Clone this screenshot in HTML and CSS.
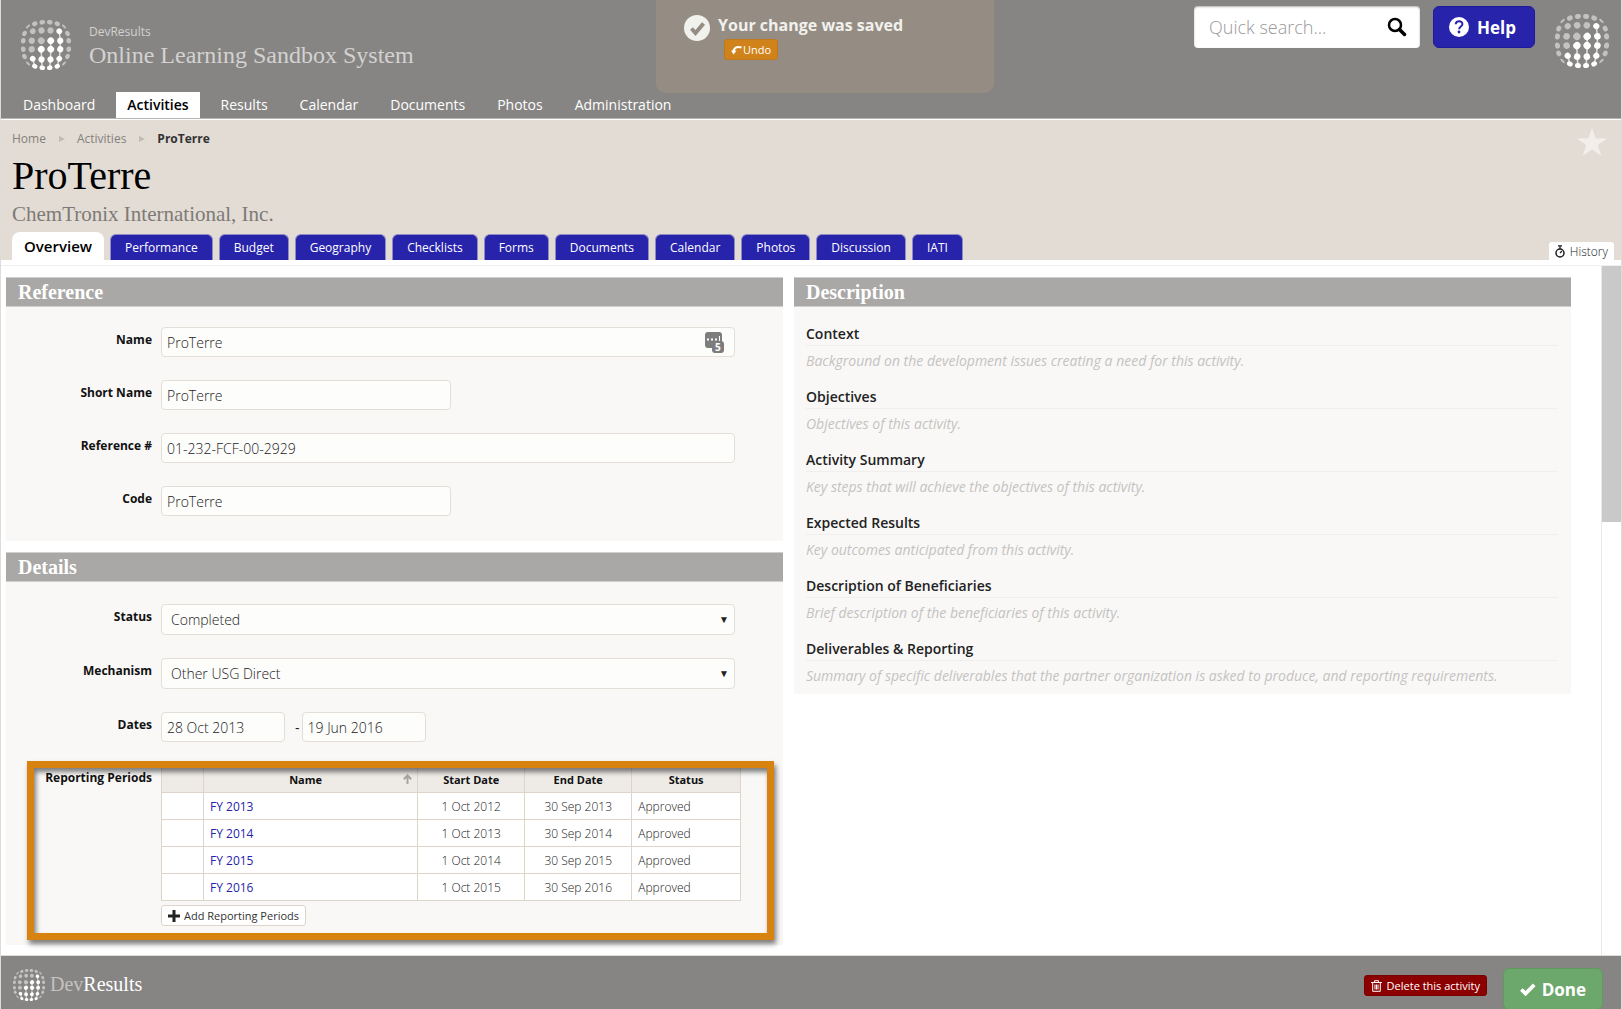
FILE: index.html
```html
<!DOCTYPE html>
<html lang="en">
<head>
  <meta charset="UTF-8">
  <meta name="viewport" content="width=device-width, initial-scale=1.0">
  <title>ProTerre - DevResults</title>
  <link rel="stylesheet" href="styles.css">
</head>
<body>

<header class="site-header">
  <div class="header-top">
    <a href="#" class="brand">
      <svg class="globe globe-brand" viewBox="-50 -50 100 100"></svg>
      <span class="brand-text">
        <span class="brand-name">DevResults</span>
        <span class="brand-title">Online Learning Sandbox System</span>
      </span>
    </a>
    <div class="header-actions">
      <form class="search">
        <input type="text" placeholder="Quick search..." aria-label="Quick search">
        <button type="button" aria-label="Search">
          <svg width="20" height="20" viewBox="0 0 20 20" fill="none" stroke="#000" stroke-linecap="round"><circle cx="8" cy="8" r="6" stroke-width="2.500"/><path d="M12.500 12.500L17.500 17.500" stroke-width="3.500"/></svg>
        </button>
      </form>
      <button type="button" class="help">
        <svg width="20" height="20" viewBox="0 0 20 20"><circle cx="10" cy="10" r="10" fill="#fff"/><path d="M6.7 7.2c.3-4 6.8-3.8 6.7 0 0 2.300-3.300 2.400-3.300 5" fill="none" stroke="#2723ab" stroke-width="2"/><circle cx="10" cy="15" r="1.400" fill="#2723ab"/></svg>
        Help
      </button>
      <svg class="globe globe-user" viewBox="-50 -50 100 100"></svg>
    </div>
  </div>
  <nav class="main-nav">
    <a href="#">Dashboard</a>
    <a href="#" class="active">Activities</a>
    <a href="#">Results</a>
    <a href="#">Calendar</a>
    <a href="#">Documents</a>
    <a href="#">Photos</a>
    <a href="#">Administration</a>
  </nav>
</header>

<!-- Saved message -->
<div class="toast">
  <svg width="26" height="26" viewBox="0 0 26 26"><circle cx="13" cy="13" r="13" fill="#f1f1ee"/><path d="M7.500 13.500l4 4.500 8-9.500" fill="none" stroke="#958d83" stroke-width="4"/></svg>
  <div>
    <strong>Your change was saved</strong>
    <button type="button" class="undo">
      <svg width="11" height="10" viewBox="0 0 11 10"><path d="M2.500 7C2.500 3 6 .8 10.500 2.500" fill="none" stroke="#fff" stroke-width="2"/><path d="M0 5.500h5.500L2.600 9.500z" fill="#fff"/></svg>Undo
    </button>
  </div>
</div>

<section class="page-head">
  <div class="breadcrumb">
    <a href="#">Home</a><i></i><a href="#">Activities</a><i></i><b>ProTerre</b>
  </div>
  <h1>ProTerre</h1>
  <h2>ChemTronix International, Inc.</h2>
  <div class="tab-row">
    <nav class="tabs">
      <a href="#" class="active">Overview</a>
      <a href="#">Performance</a>
      <a href="#">Budget</a>
      <a href="#">Geography</a>
      <a href="#">Checklists</a>
      <a href="#">Forms</a>
      <a href="#">Documents</a>
      <a href="#">Calendar</a>
      <a href="#">Photos</a>
      <a href="#">Discussion</a>
      <a href="#">IATI</a>
    </nav>
    <button type="button" class="history">
      <svg width="10" height="13" viewBox="0 0 10 13" fill="none" stroke="#222"><circle cx="5" cy="8" r="4" stroke-width="1.500"/><path d="M3 .8h4M5 1v3M5 8l2-2" stroke-width="1.300"/></svg>
      History
    </button>
  </div>
  <svg class="star" width="30" height="28" viewBox="0 0 30 28"><path d="M15 0l3.600 10.500H30l-9.200 6.600L24.300 28 15 21.400 5.700 28l3.500-10.900L0 10.500h11.400z" fill="#f2efea"/></svg>
</section>

<main class="content">
  <div class="columns">
    <div class="column">
      <section class="panel">
        <h3>Reference</h3>
        <div class="form">
          <div class="row">
            <label for="name">Name</label>
            <div class="field">
              <input type="text" id="name" value="ProTerre">
              <svg class="pass-icon" width="19" height="21" viewBox="0 0 19 21"><rect width="17" height="16" rx="3" fill="#7d7d7d"/><rect x="7" y="9" width="12" height="12" rx="3" fill="#7d7d7d"/><path d="M2 7.500h2M6 7.500h2M10 7.500h2" stroke="#fff" stroke-width="2"/><path d="M14.500 4v5" stroke="#fff"/><text x="10" y="19" fill="#fff" font-size="10" font-weight="700">5</text></svg>
            </div>
          </div>
          <div class="row">
            <label for="short">Short Name</label>
            <div class="field"><input type="text" id="short" class="short" value="ProTerre"></div>
          </div>
          <div class="row">
            <label for="ref">Reference #</label>
            <div class="field"><input type="text" id="ref" value="01-232-FCF-00-2929"></div>
          </div>
          <div class="row">
            <label for="code">Code</label>
            <div class="field"><input type="text" id="code" class="short" value="ProTerre"></div>
          </div>
        </div>
      </section>

      <section class="panel">
        <h3>Details</h3>
        <div class="form details">
          <div class="row">
            <label for="status">Status</label>
            <div class="field select">
              <select id="status"><option>Completed</option></select>
            </div>
          </div>
          <div class="row">
            <label for="mechanism">Mechanism</label>
            <div class="field select">
              <select id="mechanism"><option>Other USG Direct</option></select>
            </div>
          </div>
          <div class="row">
            <label for="start">Dates</label>
            <div class="field dates">
              <input type="text" id="start" value="28 Oct 2013">
              <span>-</span>
              <input type="text" value="19 Jun 2016" aria-label="End date">
            </div>
          </div>
          <div class="row periods">
            <span class="label">Reporting Periods</span>
            <div class="field">
              <table>
                <thead>
                  <tr>
                    <th class="col-check"></th>
                    <th class="col-name">Name<svg class="sort" width="9" height="10" viewBox="0 0 9 10" fill="none" stroke="#a8a49f" stroke-width="2"><path d="M4.500 10V1.500M.8 5.200l3.700-3.700 3.700 3.700"/></svg></th>
                    <th class="col-date">Start Date</th>
                    <th class="col-date">End Date</th>
                    <th>Status</th>
                  </tr>
                </thead>
                <tbody>
                  <tr><td></td><td><a href="#">FY 2013</a></td><td class="date">1 Oct 2012</td><td class="date">30 Sep 2013</td><td>Approved</td></tr>
                  <tr><td></td><td><a href="#">FY 2014</a></td><td class="date">1 Oct 2013</td><td class="date">30 Sep 2014</td><td>Approved</td></tr>
                  <tr><td></td><td><a href="#">FY 2015</a></td><td class="date">1 Oct 2014</td><td class="date">30 Sep 2015</td><td>Approved</td></tr>
                  <tr><td></td><td><a href="#">FY 2016</a></td><td class="date">1 Oct 2015</td><td class="date">30 Sep 2016</td><td>Approved</td></tr>
                </tbody>
              </table>
              <button type="button" class="add">
                <svg width="12" height="12" viewBox="0 0 12 12"><path d="M6 0v12M0 6h12" stroke="#222" stroke-width="3"/></svg>
                Add Reporting Periods
              </button>
            </div>
            <div class="highlight"></div>
          </div>
        </div>
      </section>
    </div>

    <div class="column">
      <section class="panel">
        <h3>Description</h3>
        <dl class="description">
          <dt>Context</dt>
          <dd>Background on the development issues creating a need for this activity.</dd>
          <dt>Objectives</dt>
          <dd>Objectives of this activity.</dd>
          <dt>Activity Summary</dt>
          <dd>Key steps that will achieve the objectives of this activity.</dd>
          <dt>Expected Results</dt>
          <dd>Key outcomes anticipated from this activity.</dd>
          <dt>Description of Beneficiaries</dt>
          <dd>Brief description of the beneficiaries of this activity.</dd>
          <dt>Deliverables &amp; Reporting</dt>
          <dd>Summary of specific deliverables that the partner organization is asked to produce, and reporting requirements.</dd>
        </dl>
      </section>
    </div>
  </div>
  <div class="scrollbar"><div class="thumb"></div></div>
</main>

<footer class="site-footer">
  <a href="#" class="footer-brand">
    <svg class="globe globe-footer" viewBox="-50 -50 100 100"></svg>
    <span><span class="dim">Dev</span>Results</span>
  </a>
  <div class="footer-actions">
    <button type="button" class="delete">
      <svg width="11" height="12" viewBox="0 0 11 12" fill="none" stroke="#fff"><path d="M0 2.500h11M3.500 2V.7h4V2M1.700 3v8.300h7.600V3M4 4.500v5M5.500 4.500v5M7 4.500v5"/></svg>
      Delete this activity
    </button>
    <button type="button" class="done">
      <svg width="17" height="13" viewBox="0 0 17 13"><path d="M1.500 6.500l4.500 4.500L15.500 1.500" fill="none" stroke="#fff" stroke-width="4"/></svg>
      Done
    </button>
  </div>
</footer>

<script>
  // One quadrant of the globe's dots, mirrored into the other three
  const quadrant = [
    [[19, 17], [57, 17], [91, 17]],
    [[18, 58], [53, 55], [86, 46]],
    [[15, 91], [45, 85], [72, 74]]
  ];
  // Dots that are lit, by row, top to bottom
  const lit = ['......', '....x.', '...xx.', '..xxx.', '.xxxx.', '.xxxx.'];

  function getPoint(row, col) {
    const point = quadrant[row < 3 ? 2 - row : row - 3][col < 3 ? 2 - col : col - 3];
    return [point[0] * (col < 3 ? -1 : 1) / 2, point[1] * (row < 3 ? -1 : 1) / 2];
  }

  function drawGlobe(svg) {
    let dots = '';
    for (let row = 0; row < 6; row++) {
      for (let col = 0; col < 6; col++) {
        const [x, y] = getPoint(row, col);
        const distance = Math.hypot(x, y) / 50;
        const squash = distance > 1 ? 0.3 : Math.sqrt(1 - 0.64 * distance * distance);
        const angle = Math.atan2(y, x) * 180 / Math.PI;
        const isLit = lit[row][col] === 'x';
        dots += `<ellipse rx="${7 * squash}" ry="${7 - 1.5 * distance}" fill="${isLit ? '#ffffff' : '#c3c2c0'}" transform="translate(${x} ${y}) rotate(${angle})"/>`;

        // Lit dots are joined down each column
        if (isLit && row < 5) {
          const [x2, y2] = getPoint(row + 1, col);
          dots += `<line x1="${x}" y1="${y}" x2="${x2}" y2="${y2}" stroke="#ffffff" stroke-opacity="0.7" stroke-width="3"/>`;
        }
      }
    }
    svg.innerHTML = dots;
  }

  document.querySelectorAll('.globe').forEach(drawGlobe);
</script>

</body>
</html>
```
FILE: styles.css
```css
* {
  box-sizing: border-box;
}

body {
  margin: 0;
  min-height: 100vh;
  display: flex;
  flex-direction: column;
  position: relative;
  border-left: 1px solid #dcdcdc;
  border-right: 1px solid #dcdcdc;
  background-color: #fff;
  color: #222;
  font-family: 'Open Sans', sans-serif;
  font-size: 14px;
}

a {
  text-decoration: none;
}

button,
input,
select {
  font-family: inherit;
}

button {
  display: flex;
  align-items: center;
  cursor: pointer;
}

/* Header */
.site-header {
  background-color: #868583;
  border-bottom: 1px solid #b5b4b1;
}

.header-top {
  display: flex;
  justify-content: space-between;
  height: 92px;
}

.brand {
  display: flex;
  gap: 18px;
  padding: 20px 0 0 20px;
}

.globe-brand {
  width: 50px;
  height: 50px;
}

.brand-text {
  display: flex;
  flex-direction: column;
  padding-top: 3px;
  color: #d3d2d0;
}

.brand-name {
  font-size: 12px;
  line-height: 18px;
}

.brand-title {
  font-family: 'Roboto Slab', 'Liberation Serif', serif;
  font-size: 24px;
  line-height: 28px;
}

.header-actions {
  display: flex;
  align-items: flex-start;
  padding: 6px 12px 0 0;
}

.search {
  display: flex;
  width: 226px;
  height: 42px;
  border-radius: 4px;
  background-color: #fff;
  box-shadow: inset 0 1px 2px rgba(0, 0, 0, 0.3);
}

.search input {
  flex: 1;
  min-width: 0;
  padding: 0 0 0 15px;
  border: none;
  background: transparent;
  font-size: 18px;
  font-weight: 300;
}

.search input::placeholder {
  color: #999;
}

.search button {
  padding: 0 13px;
  border: none;
  background: transparent;
}

.help {
  gap: 8px;
  width: 102px;
  height: 42px;
  margin: 0 20px 0 13px;
  padding: 0 15px;
  border: 1px solid #1f1b9a;
  border-radius: 6px;
  background-color: #2723ab;
  color: #fff;
  font-size: 17px;
  font-weight: 700;
}

.globe-user {
  width: 54px;
  height: 54px;
  margin-top: 8px;
}

.main-nav {
  display: flex;
  gap: 10px;
  padding-left: 11px;
}

.main-nav a {
  padding: 0 11px;
  color: #fff;
  line-height: 26px;
}

.main-nav .active {
  background-color: #fff;
  color: #000;
  font-weight: 600;
}

/* Saved message */
.toast {
  position: absolute;
  top: 0;
  left: 50%;
  display: flex;
  gap: 8px;
  width: 338px;
  height: 93px;
  margin-left: -155px;
  padding: 15px 28px;
  border-radius: 0 0 10px 10px;
  background-color: #958d83;
}

.toast strong {
  display: block;
  color: #f1f1ee;
  font-size: 16px;
  line-height: 20px;
}

.undo {
  gap: 1px;
  height: 21px;
  margin: 4px 0 0 6px;
  padding: 0 6px;
  border: 1px solid #c07818;
  border-radius: 3px;
  background-color: #d0831b;
  color: #fff;
  font-size: 11px;
}

/* Page title */
.page-head {
  position: relative;
  padding: 10px 7px 0 11px;
  border-top: 1px solid #fff;
  background-color: #e2dcd5;
}

.breadcrumb {
  display: flex;
  align-items: center;
  color: #333;
  font-size: 12px;
  line-height: 18px;
}

.breadcrumb a {
  color: #85817c;
}

.breadcrumb i {
  margin: 0 12px 0 13px;
  border-left: 6px solid #c4bab0;
  border-top: 3px solid transparent;
  border-bottom: 3px solid transparent;
}

h1,
h2 {
  margin: 0;
  font-family: 'Roboto Slab', 'Liberation Serif', serif;
  font-weight: 400;
}

h1 {
  color: #000;
  font-size: 40px;
  line-height: 56px;
}

h2 {
  color: #7d7a76;
  font-size: 21px;
  line-height: 20px;
}

.tab-row {
  display: flex;
  justify-content: space-between;
  align-items: flex-end;
  margin-top: 8px;
}

.tabs {
  display: flex;
  align-items: flex-end;
  gap: 6px;
}

.tabs a {
  padding: 0 14px;
  border: 1px solid #8f8bc4;
  border-bottom: none;
  border-radius: 6px 6px 0 0;
  background-color: #2723ab;
  color: #fff;
  font-size: 12px;
  font-weight: 500;
  line-height: 25px;
}

.tabs .active {
  padding: 0 12px;
  border: none;
  border-radius: 8px 8px 0 0;
  background-color: #fff;
  color: #000;
  font-size: 15px;
  font-weight: 600;
  line-height: 28px;
}

.history {
  gap: 5px;
  height: 18px;
  padding: 0 6px;
  border: none;
  border-radius: 3px 3px 0 0;
  background-color: #fff;
  color: #222;
  font-size: 12px;
  font-weight: 300;
}

.star {
  position: absolute;
  top: 8px;
  right: 14px;
}

/* Content */
.content {
  flex: 1;
  display: flex;
  margin-top: 5px;
  border-top: 1px solid #f0f0f0;
}

.columns {
  flex: 1;
  display: grid;
  grid-template-columns: 1fr 1fr;
  gap: 11px;
  padding: 11px 30px 10px 5px;
}

.column {
  display: flex;
  flex-direction: column;
  gap: 11px;
}

.scrollbar {
  width: 20px;
  border-left: 1px solid #e8e8e8;
}

.thumb {
  height: 256px;
  background-color: #c9c9c9;
}

.panel {
  background-color: #f9f8f7;
}

.panel h3 {
  margin: 0;
  padding: 0 12px;
  border-top: 1px solid #d0cfcd;
  border-bottom: 1px solid #d0cfcd;
  background-color: #a9a8a6;
  color: #fff;
  font-family: 'Roboto Slab', 'Liberation Serif', serif;
  font-size: 20px;
  line-height: 28px;
}

.form {
  display: flex;
  flex-direction: column;
  gap: 23px;
  padding: 20px 48px 25px 0;
}

.details {
  padding-top: 22px;
  padding-bottom: 19px;
}

.row {
  display: grid;
  grid-template-columns: 146px 1fr;
  column-gap: 9px;
}

.row label,
.label {
  color: #111;
  font-size: 12px;
  font-weight: 700;
  line-height: 26px;
  text-align: right;
}

.field {
  position: relative;
}

.field input,
.field select {
  display: block;
  width: 100%;
  height: 30px;
  padding: 0 5px;
  border: 1px solid #e3ded8;
  border-radius: 4px;
  background-color: #fdfdfc;
  color: #222;
  font-size: 14px;
  font-weight: 300;
}

.field .short {
  width: 290px;
}

.pass-icon {
  position: absolute;
  top: 5px;
  right: 11px;
}

.details .field select {
  height: 31px;
  padding: 0 9px;
  appearance: none;
}

.select::after {
  content: '▼';
  position: absolute;
  top: 8px;
  right: 6px;
  font-size: 10px;
  line-height: 14px;
  pointer-events: none;
}

.dates {
  display: flex;
  align-items: center;
}

.dates input {
  width: 124px;
}

.dates span {
  padding: 0 2px 0 10px;
}

/* Reporting periods */
.periods {
  position: relative;
}

table {
  width: calc(100% + 6px);
  border-collapse: collapse;
  table-layout: fixed;
  background-color: #fff;
  color: #222;
  font-size: 12px;
}

th,
td {
  height: 27px;
  padding: 0 6px;
  border: 1px solid #ddd5ca;
  font-weight: 300;
}

th {
  position: relative;
  background-color: #eeebe7;
  color: #111;
  font-size: 11px;
  font-weight: 700;
}

td a {
  color: #2723ab;
  font-weight: 400;
}

.col-check {
  width: 42px;
}

.col-name {
  width: 37%;
  padding-right: 16px;
}

.col-date {
  width: 107px;
}

.date {
  text-align: center;
}

.sort {
  position: absolute;
  top: 8px;
  right: 5px;
}

.add {
  gap: 4px;
  height: 21px;
  margin-top: 4px;
  padding: 0 6px;
  border: 1px solid #ddd5ca;
  border-radius: 3px;
  background-color: #fff;
  color: #333;
  font-size: 11px;
}

.highlight {
  position: absolute;
  top: -4px;
  right: -39px;
  bottom: -14px;
  left: 21px;
  border: 7px solid #d8830f;
  box-shadow: 2px 4px 5px rgba(0, 0, 0, 0.5), inset 2px 4px 5px rgba(0, 0, 0, 0.5);
  pointer-events: none;
}

/* Description */
.description {
  margin: 0;
  padding: 16px 13px 6px 12px;
}

.description dt {
  border-bottom: 1px solid #f1efed;
  font-weight: 600;
  line-height: 22px;
}

.description dd {
  margin: 0 0 13px;
  padding-top: 3px;
  color: #c4c3c1;
  font-style: italic;
  line-height: 24px;
}

.description dd:last-child {
  margin-bottom: 0;
}

/* Footer */
.site-footer {
  display: flex;
  justify-content: space-between;
  height: 54px;
  border-top: 1px solid #dcdcdc;
  background-color: #868583;
  overflow: hidden;
}

.footer-brand {
  display: flex;
  align-items: center;
  gap: 5px;
  padding: 4px 0 0 12px;
  color: #fff;
  font-family: 'Roboto Slab', 'Liberation Serif', serif;
  font-size: 20px;
}

.globe-footer {
  width: 32px;
  height: 32px;
}

.dim {
  color: #c3c2c0;
}

.footer-actions {
  display: flex;
  align-items: flex-start;
  gap: 16px;
  padding: 12px 18px 0 0;
}

.delete {
  gap: 5px;
  height: 21px;
  margin-top: 7px;
  padding: 0 6px;
  border: 1px solid #7a0000;
  border-radius: 3px;
  background-color: #8b0000;
  color: #fff;
  font-size: 11px;
}

.done {
  gap: 6px;
  width: 100px;
  height: 42px;
  padding: 0 16px;
  border: 1px solid #5f9a5f;
  border-radius: 6px;
  background-color: #6ca76c;
  color: #fff;
  font-size: 17px;
  font-weight: 700;
}
```
